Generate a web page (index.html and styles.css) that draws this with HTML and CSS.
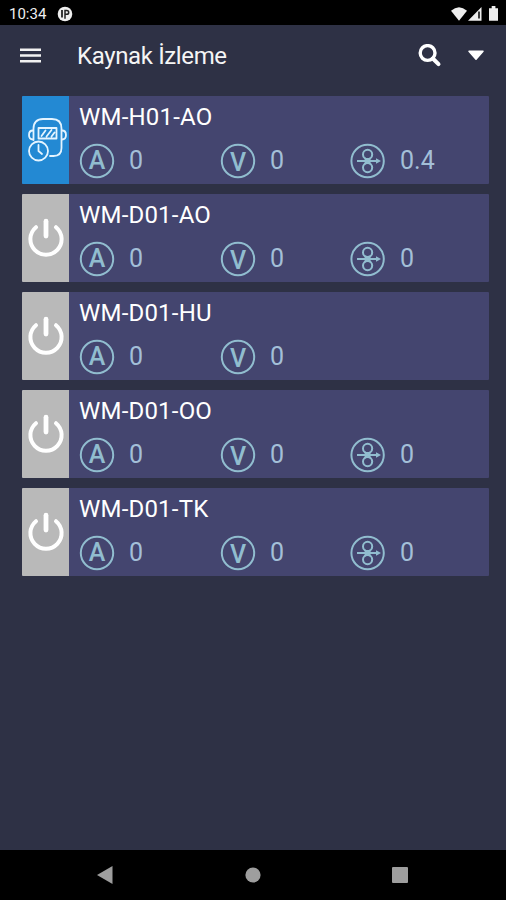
FILE: index.html
```html
<!DOCTYPE html>
<html lang="tr">
<head>
<meta charset="utf-8">
<title>Kaynak İzleme</title>
<link rel="stylesheet" href="styles.css">
</head>
<body>
<svg class="defs" aria-hidden="true">
  <symbol id="amp" viewBox="0 0 36 36"><circle cx="18" cy="18" r="16.2" fill="none" stroke="currentColor" stroke-width="2"/><text class="unit" x="18" y="26.3" text-anchor="middle">A</text></symbol>
  <symbol id="volt" viewBox="0 0 36 36"><circle cx="18" cy="18" r="16.2" fill="none" stroke="currentColor" stroke-width="2"/><text class="unit" x="18" y="28" text-anchor="middle">V</text></symbol>
  <symbol id="wire" viewBox="0 0 36 36"><g fill="none" stroke="currentColor" stroke-width="2"><circle cx="17.6" cy="18" r="16.2"/><circle cx="17.6" cy="11.4" r="4.6"/><circle cx="17.6" cy="24.6" r="4.6"/><path d="M7 18H27M14.5 15l6.2 6M20.7 15l-6.2 6"/></g><path d="M26 15.2l5 2.8-5 2.8z" fill="currentColor"/></symbol>
  <symbol id="power" viewBox="0 0 40 40"><g fill="none" stroke="#fff" stroke-linecap="round"><path d="M10 10.2A15.6 15.6 0 1 0 30 10.2" stroke-width="4"/><path d="M20 4.2V19" stroke-width="4.8"/></g></symbol>
  <symbol id="mask" viewBox="0 0 42 46"><g fill="none" stroke="#e4f4ff" stroke-width="1.8" stroke-linecap="round" stroke-linejoin="round"><path d="M8.5 24V12.500C8.500 6.500 12 3 18 3h9c6 0 9.500 3.500 9.500 9.500V32c0 5-3 8-8 8H25"/><path d="M8 14.500c-3 0-4 2-4 4.500s1 4.500 4 4.500M37 14.500c3 0 4 2 4 4.500s-1 4.500-4 4.500"/><path d="M13.500 12H31.500v10.500H13.500zM16.500 20l4-5.500M21.500 20.500l5-6.500M26.500 20.500l3-4"/><circle cx="13.500" cy="35" r="9.500"/><path d="M13.500 29v6l3.500 3"/></g></symbol>
</svg>
<div class="screen">
  <div class="status">
    <span class="clock">10:34</span>
    <svg class="badge" width="16" height="16" viewBox="0 0 16 16"><circle cx="8" cy="8" r="7.3" fill="#eee"/><path d="M5 4v7.500" stroke="#222" stroke-width="1.8"/><path d="M8 12.800V4.500h1.800a1.900 1.900 0 0 1 0 3.800H8" fill="none" stroke="#222" stroke-width="1.5"/></svg>
    <svg class="signals" width="50" height="18" viewBox="0 0 50 18"><path d="M0 5.800Q8-1.200 16 5.800L8 15.800z" fill="#eee"/><path d="M17 15.800L30.500 2v13.800z" fill="#eee"/><path d="M28 6.500v7" stroke="#111" stroke-width="1.600"/><path d="M38 3.200h2.700V1h3.700v2.200H47v12.600h-9z" fill="#eee"/></svg>
  </div>
  <header class="bar">
    <svg class="menu" width="21" height="16" viewBox="0 0 21 16"><path d="M0 1.800h21M0 7.500h21M0 13.200h21" stroke="#f2f2f2" stroke-width="2.6"/></svg>
    <h1>Kaynak İzleme</h1>
    <svg class="search" width="24" height="24" viewBox="0 0 24 24"><g fill="none" stroke="#fff"><circle cx="9.6" cy="9" r="7.4" stroke-width="3.4"/><path d="M14.800 14.500l5.700 5.700" stroke-width="4" stroke-linecap="round"/></g></svg>
    <svg class="caret" width="18" height="11" viewBox="0 0 18 11"><path d="M2 1.200h14L9 9.300z" fill="#fff" stroke="#fff" stroke-width="1.500" stroke-linejoin="round"/></svg>
  </header>
  <main class="list">
    <article class="card active"><div class="state"><svg class="mask"><use href="#mask"/></svg></div><div class="info"><h2>WM-H01-AO</h2><div class="values"><span class="value"><svg><use href="#amp"/></svg>0</span><span class="value"><svg><use href="#volt"/></svg>0</span><span class="value"><svg><use href="#wire"/></svg>0.4</span></div></div></article>
    <article class="card"><div class="state"><svg class="power"><use href="#power"/></svg></div><div class="info"><h2>WM-D01-AO</h2><div class="values"><span class="value"><svg><use href="#amp"/></svg>0</span><span class="value"><svg><use href="#volt"/></svg>0</span><span class="value"><svg><use href="#wire"/></svg>0</span></div></div></article>
    <article class="card"><div class="state"><svg class="power"><use href="#power"/></svg></div><div class="info"><h2>WM-D01-HU</h2><div class="values"><span class="value"><svg><use href="#amp"/></svg>0</span><span class="value"><svg><use href="#volt"/></svg>0</span></div></div></article>
    <article class="card"><div class="state"><svg class="power"><use href="#power"/></svg></div><div class="info"><h2>WM-D01-OO</h2><div class="values"><span class="value"><svg><use href="#amp"/></svg>0</span><span class="value"><svg><use href="#volt"/></svg>0</span><span class="value"><svg><use href="#wire"/></svg>0</span></div></div></article>
    <article class="card"><div class="state"><svg class="power"><use href="#power"/></svg></div><div class="info"><h2>WM-D01-TK</h2><div class="values"><span class="value"><svg><use href="#amp"/></svg>0</span><span class="value"><svg><use href="#volt"/></svg>0</span><span class="value"><svg><use href="#wire"/></svg>0</span></div></div></article>
  </main>
  <nav class="nav">
    <svg width="18" height="20" viewBox="0 0 18 20"><path d="M1 10L16.500 1v18z" fill="#9e9e9e"/></svg>
    <svg width="18" height="18" viewBox="0 0 18 18"><circle cx="9" cy="9" r="7.600" fill="#9e9e9e"/></svg>
    <svg width="18" height="18" viewBox="0 0 18 18"><rect x="1" y="1" width="16" height="16" rx="1" fill="#9e9e9e"/></svg>
  </nav>
</div>
</body>
</html>
```
FILE: styles.css
```css
* { box-sizing: border-box; }
body { margin: 0; font-family: Roboto, "Liberation Sans", sans-serif; background: #2e3145; }
h1, h2 { margin: 0; font-weight: 400; }
svg { display: block; flex: none; }
.defs { display: none; }
.screen { width: 506px; height: 900px; display: flex; flex-direction: column; background: #2e3145; }
.status { height: 25px; background: #000; display: flex; align-items: center; padding: 2px 5px 0 9px; color: #eee; }
.clock { width: 48px; font-size: 15px; line-height: 20px; }
.signals { margin-left: auto; }
.bar { height: 61px; display: flex; align-items: center; padding: 0 21px 0 20px; color: #f5f5f5; }
.bar h1 { flex: 1; margin-left: 36px; font-size: 24px; line-height: 30px; letter-spacing: -0.37px; }
.search { margin-right: 25px; }
.list { flex: 1; display: flex; flex-direction: column; gap: 10px; padding: 10px 17px 0 22px; }
.card { height: 88px; display: flex; background: #44456f; border-radius: 1px; overflow: hidden; }
.state { width: 47px; display: flex; align-items: center; justify-content: center; background: #b9b9b9; padding-bottom: 3px; }
.active .state { background: #2389d3; }
.power { width: 40px; height: 40px; }
.mask { width: 42px; height: 46px; }
.info { flex: 1; padding: 6px 0 0 10px; }
.info h2 { font-size: 24px; line-height: 30px; letter-spacing: 0.2px; color: #fff; }
.values { display: grid; grid-template-columns: 141px 130px 1fr; margin-top: 11px; }
.value { display: flex; align-items: center; gap: 14px; font-size: 25px; line-height: 36px; color: #a3bfd8; }
.value svg { width: 36px; height: 36px; color: #91bdcf; }
.unit { font: 500 25px Roboto, sans-serif; fill: currentColor; }
.nav { height: 50px; background: #000; display: flex; align-items: center; justify-content: space-between; padding: 0 97px 0 96px; }
```
